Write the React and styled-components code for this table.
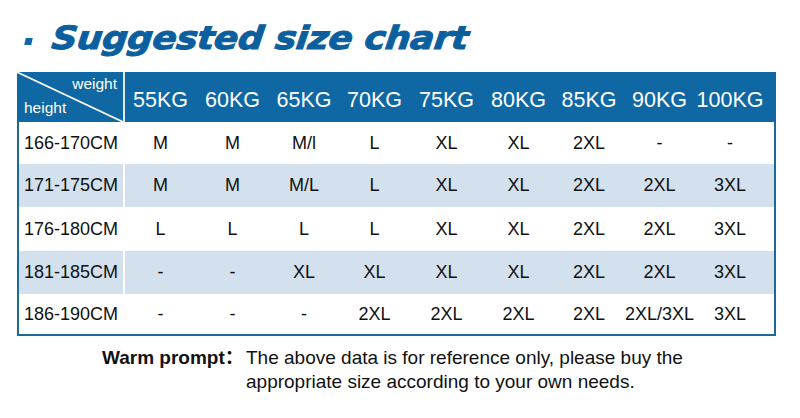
import React from "react";
import styled, { createGlobalStyle } from "styled-components";

const Global = createGlobalStyle`
  html, body { margin: 0; padding: 0; background: #fff; }
  body { font-family: "Liberation Sans", Arial, sans-serif; }
`;

const TRACKS = "71px 73px 70px 71px 73px 71px 70px 71px 70px 1fr";
const BLUE = "#0f68a3";
const BORDER = "#1c6997";

const Page = styled.div`
  width: 800px;
  height: 418px;
  box-sizing: border-box;
  padding: 18px 0 0 17px;
  overflow: hidden;
`;

const TitleRow = styled.div`
  display: flex;
  align-items: center;
  height: 40px;
  margin-bottom: 14px;
`;

const Dot = styled.span`
  display: block;
  width: 7px;
  height: 7px;
  background: ${BLUE};
  margin: 7px 20px 0 8px;
  transform: skewX(-12deg);
`;

const Title = styled.h1`
  margin: 0;
  font-family: "DejaVu Sans", sans-serif;
  font-weight: 900;
  font-style: italic;
  font-size: 32px;
  letter-spacing: -0.3px;
  color: #0c5f9e;
  -webkit-text-stroke: 1px #0c5f9e;
  white-space: nowrap;
  transform: scaleX(1.115) skewX(-6deg);
  transform-origin: left center;
`;

const Table = styled.div`
  width: 759px;
`;

const HeaderRow = styled.div`
  display: grid;
  grid-template-columns: 108px ${TRACKS};
  height: 50px;
  background: ${BLUE};
`;

const Body = styled.div`
  border: 2px solid ${BORDER};
  border-top: none;
`;

const Corner = styled.div`
  position: relative;
  border-right: 2px solid #dfe9f2;
  color: #fff;
  font-size: 15.5px;
`;

const Diagonal = styled.svg`
  position: absolute;
  inset: 0;
  width: 100%;
  height: 100%;
`;

const Weight = styled.span`
  position: absolute;
  right: 6px;
  top: 3px;
`;

const Height = styled.span`
  position: absolute;
  left: 7px;
  bottom: 5px;
`;

const HeadCell = styled.div`
  display: flex;
  align-items: center;
  justify-content: center;
  color: #fff;
  font-size: 21.5px;
  padding-top: 6px;
`;

const Row = styled.div`
  display: grid;
  grid-template-columns: 106px ${TRACKS};
  height: ${(p) => p.$h}px;
  background: ${(p) => (p.$alt ? "#d3e1ee" : "#fff")};
`;

const Label = styled.div`
  display: flex;
  align-items: center;
  padding-left: 5px;
  font-size: 18px;
  color: #111;
  border-right: 2px solid #fff;
`;

const Cell = styled.div`
  display: flex;
  align-items: center;
  justify-content: center;
  font-size: 18px;
  color: #111;
`;

const Note = styled.div`
  display: grid;
  grid-template-columns: 144px auto;
  margin: 10px 0 0 85px;
  font-family: "Liberation Sans", "Noto Sans CJK SC", sans-serif;
  font-size: 19px;
  line-height: 24px;
  color: #111;
`;

const NoteLabel = styled.span`
  font-weight: bold;
  white-space: nowrap;
`;

const heads = ["55KG", "60KG", "65KG", "70KG", "75KG", "80KG", "85KG", "90KG", "100KG"];
const rows = [
  ["166-170CM", ["M", "M", "M/l", "L", "XL", "XL", "2XL", "-", "-"], 42],
  ["171-175CM", ["M", "M", "M/L", "L", "XL", "XL", "2XL", "2XL", "3XL"], 43],
  ["176-180CM", ["L", "L", "L", "L", "XL", "XL", "2XL", "2XL", "3XL"], 44],
  ["181-185CM", ["-", "-", "XL", "XL", "XL", "XL", "2XL", "2XL", "3XL"], 43],
  ["186-190CM", ["-", "-", "-", "2XL", "2XL", "2XL", "2XL", "2XL/3XL", "3XL"], 40],
];

export default function App() {
  return (
    <Page>
      <Global />
      <TitleRow>
        <Dot />
        <Title>Suggested size chart</Title>
      </TitleRow>
      <Table>
        <HeaderRow>
          <Corner>
            <Diagonal viewBox="0 0 106 50" preserveAspectRatio="none">
              <line x1="0" y1="0" x2="106" y2="50" stroke="#fff" strokeWidth="1.6" />
            </Diagonal>
            <Weight>weight</Weight>
            <Height>height</Height>
          </Corner>
          {heads.map((h) => (
            <HeadCell key={h}>{h}</HeadCell>
          ))}
        </HeaderRow>
        <Body>
          {rows.map(([label, vals, h], i) => (
            <Row key={label} $alt={i % 2 === 1} $h={h}>
              <Label>{label}</Label>
              {vals.map((v, j) => (
                <Cell key={j}>{v}</Cell>
              ))}
            </Row>
          ))}
        </Body>
      </Table>
      <Note>
        <NoteLabel>Warm prompt：</NoteLabel>
        <span>
          The above data is for reference only, please buy the
          <br />
          appropriate size according to your own needs.
        </span>
      </Note>
    </Page>
  );
}
